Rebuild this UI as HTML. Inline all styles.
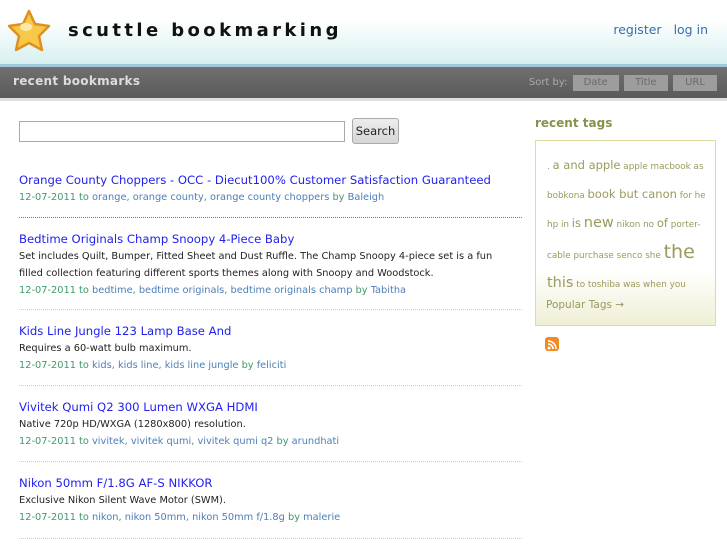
<!DOCTYPE html>
<html><head><meta charset="utf-8"><style>
*{margin:0;padding:0;box-sizing:border-box}
body{width:727px;height:545px;overflow:hidden;background:#fff;font-family:"DejaVu Sans","Liberation Sans",sans-serif;position:relative}
#hdr{position:absolute;left:0;top:0;width:727px;height:66px;background:linear-gradient(#fff 0%,#fff 30%,#d4efee 100%)}
#hdr h1{position:absolute;left:68px;top:20px;font:bold 18px "DejaVu Sans",sans-serif;letter-spacing:3.4px;color:#111}
#nav{position:absolute;right:19px;top:22px;font-size:12.5px;color:#3a6ea8}
#nav span{margin-left:12px}
#line{position:absolute;top:64px;left:0;width:727px;height:3px;background:#9fc8d8}
#bar{position:absolute;top:67px;left:0;width:727px;height:31px;background:linear-gradient(#707070,#5a5a5a)}
#bar h2{position:absolute;left:13px;top:7px;font:bold 12px "DejaVu Sans",sans-serif;color:#ddd;letter-spacing:.3px}
#sort{position:absolute;right:10px;top:8px;font-size:10px;color:#aaa}
#sort b{font-weight:normal;display:inline-block;background:#9d9d9d;color:#6a6a6a;padding:2px 0;text-align:center;margin-left:2px;height:16px}
#strip{position:absolute;top:98px;left:0;width:727px;height:3px;background:#ddd}
#search{position:absolute;left:19px;top:121px;width:326px;height:21px;border:1px solid #aaa}
#btn{position:absolute;left:352px;top:118px;width:47px;height:26px;border:1px solid #aaa;border-radius:3px;background:linear-gradient(#eee,#d6d6d6);font-size:11.5px;text-align:center;line-height:24px;color:#222}
.bm{position:absolute;left:19px;width:503px;font-size:9.8px}
.bm a{display:block;color:#2222ee;font-size:11.65px;line-height:17px}
.bm p{color:#222;line-height:17px}
.bm .m{color:#3c9b6a;line-height:17px}
.bm .m i{font-style:normal;color:#4d7fb8}
.hr{position:absolute;left:19px;width:503px;border-top:1px dotted #777}
#rt{position:absolute;left:535px;top:116px;font:bold 12px "DejaVu Sans",sans-serif;color:#8a9050}
#tags{position:absolute;left:535px;top:140px;width:181px;height:186px;border:1px solid #dcdca0;background:linear-gradient(#fff 0%,#fff 70%,#efefd6 100%);padding:11px 8px 0 11px;color:#9a9a5e;font-size:8.8px;line-height:27px}
#tags .l{font-size:11.5px}#tags .x{font-size:14.5px}#tags .xx{font-size:19px}
#pop{position:absolute;left:546px;top:299px;font-size:10.5px;color:#9a9a5e}
#rss{position:absolute;left:545px;top:337px;width:14px;height:14px;border-radius:3px;background:#f08a24}
</style></head><body>
<div id="hdr">
<svg style="position:absolute;left:7px;top:9px" width="44" height="45" viewBox="0 0 44 45"><polygon points="22,2 28,15 42,17 32,27 35,41 22,34 9,41 12,27 2,17 16,15" fill="#f7c84a" stroke="#e0901e" stroke-width="2.5" stroke-linejoin="round"/><ellipse cx="19" cy="18" rx="6" ry="4" fill="#fde9a6"/></svg>
<h1>scuttle bookmarking</h1>
<div id="nav"><span>register</span><span>log in</span></div>
</div>
<div id="line"></div>
<div id="bar"><h2>recent bookmarks</h2>
<div id="sort">Sort by: <b style="width:46px">Date</b> <b style="width:44px">Title</b> <b style="width:44px">URL</b></div></div>
<div id="strip"></div>
<div id="search"></div><div id="btn">Search</div>

<div class="bm" style="top:172px"><a>Orange County Choppers - OCC - Diecut100% Customer Satisfaction Guaranteed</a><div class="m">12-07-2011 to <i>orange</i>, <i>orange county</i>, <i>orange county choppers</i> by <i>Baleigh</i></div></div>
<div class="hr" style="top:217px"></div>
<div class="bm" style="top:231px"><a>Bedtime Originals Champ Snoopy 4-Piece Baby</a><p>Set includes Quilt, Bumper, Fitted Sheet and Dust Ruffle. The Champ Snoopy 4-piece set is a fun<br>filled collection featuring different sports themes along with Snoopy and Woodstock.</p><div class="m">12-07-2011 to <i>bedtime</i>, <i>bedtime originals</i>, <i>bedtime originals champ</i> by <i>Tabitha</i></div></div>
<div class="hr" style="top:309px;border-color:#ccc"></div>
<div class="bm" style="top:323px"><a>Kids Line Jungle 123 Lamp Base And</a><p>Requires a 60-watt bulb maximum.</p><div class="m">12-07-2011 to <i>kids</i>, <i>kids line</i>, <i>kids line jungle</i> by <i>feliciti</i></div></div>
<div class="hr" style="top:385px;border-color:#ccc"></div>
<div class="bm" style="top:399px"><a>Vivitek Qumi Q2 300 Lumen WXGA HDMI</a><p>Native 720p HD/WXGA (1280x800) resolution.</p><div class="m">12-07-2011 to <i>vivitek</i>, <i>vivitek qumi</i>, <i>vivitek qumi q2</i> by <i>arundhati</i></div></div>
<div class="hr" style="top:461px;border-color:#ccc"></div>
<div class="bm" style="top:475px"><a>Nikon 50mm F/1.8G AF-S NIKKOR</a><p>Exclusive Nikon Silent Wave Motor (SWM).</p><div class="m">12-07-2011 to <i>nikon</i>, <i>nikon 50mm</i>, <i>nikon 50mm f/1.8g</i> by <i>malerie</i></div></div>
<div class="hr" style="top:538px;border-color:#ccc"></div>

<div id="rt">recent tags</div>
<div id="tags">. <span class="l">a and apple</span> apple macbook as<br>bobkona <span class="l">book but canon</span> for he<br>hp in <span class="l">is</span> <span class="x">new</span> nikon no <span class="l">of</span> porter-<br>cable purchase senco she <span class="xx">the</span><br><span class="x">this</span> to toshiba was when you</div>
<div id="pop">Popular Tags →</div>
<div id="rss"><svg width="14" height="14" viewBox="0 0 14 14"><circle cx="4" cy="10" r="1.5" fill="#fff"/><path d="M3 6a5 5 0 0 1 5 5M3 3a8 8 0 0 1 8 8" stroke="#fff" stroke-width="1.6" fill="none"/></svg></div>
</body></html>
